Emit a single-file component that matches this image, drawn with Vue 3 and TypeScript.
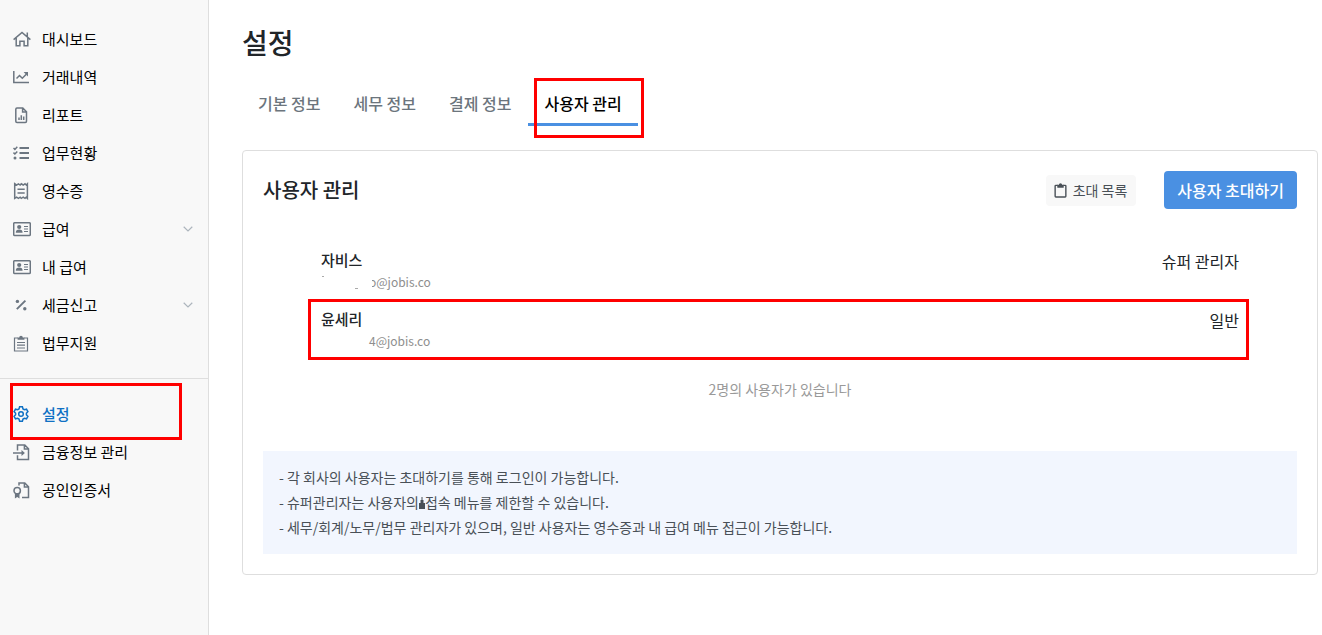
<script setup lang="ts">
interface MenuItem {
  label: string
  icon: string
  expandable?: boolean
  active?: boolean
}

const mainMenu: MenuItem[] = [
  { label: '대시보드', icon: 'home' },
  { label: '거래내역', icon: 'chart' },
  { label: '리포트', icon: 'report' },
  { label: '업무현황', icon: 'tasks' },
  { label: '영수증', icon: 'receipt' },
  { label: '급여', icon: 'card', expandable: true },
  { label: '내 급여', icon: 'card' },
  { label: '세금신고', icon: 'percent', expandable: true },
  { label: '법무지원', icon: 'clipboard' },
]

const settingsMenu: MenuItem[] = [
  { label: '설정', icon: 'gear', active: true },
  { label: '금융정보 관리', icon: 'import' },
  { label: '공인인증서', icon: 'certificate' },
]

const menus: MenuItem[][] = [mainMenu, settingsMenu]

const tabs: string[] = ['기본 정보', '세무 정보', '결제 정보', '사용자 관리']
const activeTab = '사용자 관리'

const users = [
  { name: '자비스', email: 'o@jobis.co', role: '슈퍼 관리자', marked: false },
  { name: '윤세리', email: '4@jobis.co', role: '일반', marked: true },
]
</script>

<template>
  <div class="page">
    <aside class="sidebar">
      <nav>
        <ul v-for="(menu, m) in menus" :key="m" class="menu">
          <li v-for="item in menu" :key="item.label">
            <a href="#" class="menu-link" :class="{ active: item.active }">
              <svg class="icon" viewBox="0 0 18 18" aria-hidden="true">
                <g v-if="item.icon === 'home'">
                  <path d="M.6 9.600 9 2.500l8.400 7.100M14.300 2.500v4M3.200 8v7.700h3.700v-4.500h4.200v4.500h3.700V8" />
                </g>
                <g v-else-if="item.icon === 'chart'">
                  <path d="M.8 3v11.500H16M3.500 10.500l3-3 2.800 2.800 4-4" />
                  <path class="solid" d="M10.600 4H15v4.400z" />
                </g>
                <g v-else-if="item.icon === 'report'">
                  <path d="M9.800 2H4Q2.800 2 2.800 3.200v12q0 1.200 1.200 1.200h8.300q1.200 0 1.200-1.200V5.700zM9.600 2v3.900h3.900" />
                  <path d="M6 14v-2.500M8.300 14V9.200M10.700 14v-3.500" />
                </g>
                <g v-else-if="item.icon === 'tasks'">
                  <path d="m.5 4 1.400 1.400L4.300 2.800M.5 8.600 1.900 10l2.400-2.600" />
                  <path class="bar" d="M6.500 4H16M6.500 9H16M6.500 14H16" />
                  <circle class="solid" cx="2" cy="14" r="1.500" />
                </g>
                <g v-else-if="item.icon === 'receipt'">
                  <path d="M1.700 1.700 3.600 3l1.800-1.200L7.200 3l1.100-1.200L10.200 3 12 1.800 13.200 3l1.200-1.200v14.600L13.200 15.200 12 16.400l-1.800-1.200-1.900 1.200-1.100-1.200-1.800 1.200-1.800-1.200-1.900 1.200zM4.500 7.300h7.200M4.500 10.900h7.200" />
                </g>
                <g v-else-if="item.icon === 'card'">
                  <rect x=".7" y="2.700" width="16.600" height="12.800" rx="1" />
                  <circle class="solid" cx="6.200" cy="7" r="2.100" />
                  <path class="solid" d="M2.800 12.800q0-3.200 3.400-3.200t3.400 3.200z" />
                  <path class="thin" d="M11 6.500h4M11 9h4M11 11.500h4" />
                </g>
                <g v-else-if="item.icon === 'percent'">
                  <path class="bar" d="M3.800 13.200 12.400 4.600" />
                  <circle class="solid" cx="4.400" cy="5.400" r="1.700" />
                  <circle class="solid" cx="11.800" cy="12.700" r="1.700" />
                </g>
                <g v-else-if="item.icon === 'clipboard'">
                  <path class="thin" d="M5 4H1.500v13h13V4H11" />
                  <path class="solid" d="M4.600 5.700V3.600h1.600a1.800 1.800 0 0 1 3.600 0h1.600v2.100z" />
                  <path class="thin" d="M4 8.500h8M4 11.200h8M4 14h8" />
                </g>
                <g v-else-if="item.icon === 'gear'">
                  <path d="M6.600 1.800h2.800l.6 2.100 1.400.8 2.100-.5 1.400 2.400L13.400 8.200v1.600l1.500 1.600-1.400 2.400-2.100-.5-1.400.8-.6 2.100H6.600L6 14.100l-1.400-.8-2.100.5-1.400-2.400 1.500-1.600V8.200L1.100 6.600l1.400-2.400 2.100.5L6 3.900z" />
                  <circle cx="8" cy="9" r="2.300" />
                </g>
                <g v-else-if="item.icon === 'import'">
                  <path d="M4.500 7.500V2h7.300l3.700 3.700v10.700h-11v-4.100M11.400 2v3.900h4M0 9.900h10" />
                  <path class="solid" d="m8.500 6.900 3.400 3-3.400 3z" />
                </g>
                <g v-else>
                  <path d="M6 4.500V2h5.800l3.700 3.700v10.700H9M11.400 2v3.900h4" />
                  <circle cx="4.200" cy="9.700" r="3.200" />
                  <path class="solid" d="M1.900 12.200h4.600v5.200l-2.300-1.300-2.300 1.300z" />
                </g>
              </svg>
              <span class="label">{{ item.label }}</span>
              <svg v-if="item.expandable" class="chevron" viewBox="0 0 10 6" aria-hidden="true">
                <path d="m.7.8 4.300 4.200L9.300.8" />
              </svg>
            </a>
          </li>
        </ul>
      </nav>
    </aside>

    <main class="content">
      <h1>설정</h1>
      <nav class="tabs">
        <a v-for="tab in tabs" :key="tab" href="#" class="tab" :class="{ current: tab === activeTab }">{{ tab }}</a>
      </nav>

      <section class="panel">
        <header class="panel-head">
          <h2>사용자 관리</h2>
          <button type="button" class="list-button">
            <svg viewBox="0 0 12 14" aria-hidden="true">
              <path d="M3.500 2.200H1.700q-.7 0-.7.700v9.400q0 .7.700.7h8.600q.7 0 .7-.7V2.900q0-.7-.7-.7H8.500" />
              <path class="clip" d="M3 4.400V1.700h1.500a1.500 1.500 0 0 1 3 0H9v2.700z" />
            </svg>
            초대 목록
          </button>
          <button type="button" class="invite-button">사용자 초대하기</button>
        </header>

        <ul class="users">
          <li v-for="user in users" :key="user.name" class="user" :class="{ marked: user.marked }">
            <div>
              <div class="name">{{ user.name }}</div>
              <div class="email" :class="{ masked: !user.marked }">
                <svg viewBox="0 0 48 16" aria-hidden="true">
                  <path v-if="!user.marked" d="M1 2.500h2M34 14.500h3" />
                </svg>
                <span>{{ user.email }}</span>
              </div>
            </div>
            <div class="role">{{ user.role }}</div>
          </li>
        </ul>
        <p class="count">2명의 사용자가 있습니다</p>

        <div class="notes">
          <p>- 각 회사의 사용자는 초대하기를 통해 로그인이 가능합니다.</p>
          <p>- 슈퍼관리자는 사용자의<svg class="mark" viewBox="0 0 6 12" aria-hidden="true"><path d="M2.500 0h1v3h1v3H6v6H0V6h1.500V3h1z" /></svg>접속 메뉴를 제한할 수 있습니다.</p>
          <p>- 세무/회계/노무/법무 관리자가 있으며, 일반 사용자는 영수증과 내 급여 메뉴 접근이 가능합니다.</p>
        </div>
      </section>
    </main>
  </div>
</template>

<style>
body {
  margin: 0;
  background: #fff;
}
</style>

<style scoped>
.page {
  display: flex;
  min-height: 100vh;
  font-family: "Noto Sans CJK KR", sans-serif;
  font-size: 14px;
  color: #212529;
}
ul,
h1,
h2,
p {
  margin: 0;
  padding: 0;
  list-style: none;
}
a {
  text-decoration: none;
}
button {
  border: 0;
  border-radius: 4px;
  font-family: inherit;
  white-space: nowrap;
}
.sidebar {
  box-sizing: border-box;
  flex: 0 0 209px;
  padding-top: 4px;
  background: #f8f8f8;
  border-right: 1px solid #dedede;
}
.menu {
  padding: 16px 0;
}
.menu + .menu {
  border-top: 1px solid #dedede;
}
.menu-link {
  position: relative;
  display: flex;
  align-items: center;
  gap: 11px;
  height: 38px;
  padding: 0 15px 0 13px;
  font-size: 15px;
  color: #000;
}
.label {
  padding-bottom: 2px;
}
.icon {
  width: 18px;
  height: 18px;
  fill: none;
  stroke: #6c7681;
  stroke-width: 1.5;
}
.icon .solid {
  fill: #6c7681;
  stroke: none;
}
.icon .bar {
  stroke-width: 1.9;
}
.icon .thin {
  stroke-width: 1.2;
}
.chevron {
  width: 10px;
  height: 6px;
  margin-left: auto;
  fill: none;
  stroke: #adb5bd;
  stroke-width: 1.2;
}
.active {
  font-weight: 500;
  color: #1071c4;
}
.active .icon {
  stroke: #1071c4;
}
.active::after,
.current::after,
.marked::after {
  content: "";
  position: absolute;
  border: 3px solid #f00;
  pointer-events: none;
}
.active::after {
  inset: -12px 26px -7px 10px;
}
.content {
  flex: 1;
  min-width: 0;
  padding: 21px 4px 60px 33px;
}
h1 {
  font-size: 28px;
  line-height: 42px;
  font-weight: 500;
}
.tabs {
  display: flex;
  gap: 1px;
  margin-top: 19px;
}
.tab {
  position: relative;
  padding: 9px 16px 8px;
  border-bottom: 3px solid transparent;
  font-size: 16px;
  line-height: 24px;
  font-weight: 500;
  color: #6c757d;
}
.current {
  border-color: #4a90e2;
  color: #000;
}
.current::after {
  inset: -4px -6px -15px 6px;
}
.panel {
  margin-top: 24px;
  padding: 20px;
  border: 1px solid #dedede;
  border-radius: 4px;
}
.panel-head {
  display: flex;
  align-items: center;
}
h2 {
  flex: 1;
  font-size: 20px;
  line-height: 30px;
  font-weight: 500;
}
.list-button {
  display: flex;
  align-items: center;
  gap: 6px;
  height: 31px;
  margin-right: 28px;
  padding: 0 9px 0 8px;
  background: #f8f8f8;
  font-size: 14px;
  color: #495057;
}
.list-button svg {
  width: 13px;
  height: 15px;
  fill: none;
  stroke: #495057;
  stroke-width: 1.3;
}
.list-button .clip {
  fill: #495057;
  stroke: none;
}
.invite-button {
  height: 38px;
  padding: 0 13px;
  background: #4a90e2;
  font-size: 16px;
  font-weight: 500;
  color: #fff;
}
.users {
  margin-top: 32px;
  padding: 0 58px;
}
.user {
  position: relative;
  display: flex;
  justify-content: space-between;
  height: 51px;
  padding-top: 8px;
}
.marked::after {
  inset: -1px -10px -1px -13px;
}
.name {
  font-size: 15px;
  line-height: 22px;
  font-weight: 500;
}
.email {
  position: relative;
  display: flex;
  font-size: 12px;
  line-height: 22px;
  color: #8e8e8e;
}
.email svg {
  width: 48px;
  height: 16px;
  margin-top: 3px;
  stroke: #aaa;
}
.masked::after {
  content: "";
  position: absolute;
  inset: 0 auto 0 46px;
  width: 5px;
  background: #fff;
}
.role {
  font-size: 16px;
  line-height: 24px;
}
.count {
  margin-top: 20px;
  font-size: 14px;
  line-height: 21px;
  text-align: center;
  color: #999;
}
.notes {
  margin-top: 51px;
  padding: 14px 16px;
  background: #f2f6fe;
  font-size: 14px;
  line-height: 25px;
  color: #495057;
}
.mark {
  width: 6px;
  height: 12px;
  fill: #495057;
  vertical-align: -1px;
}
</style>
